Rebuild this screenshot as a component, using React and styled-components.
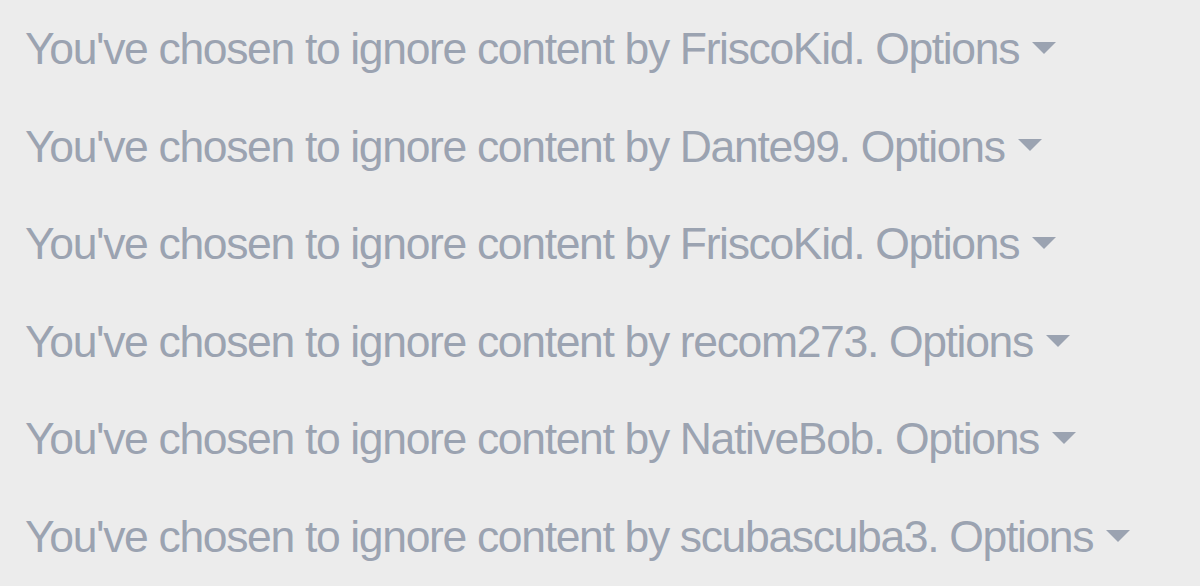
import React from "react";
import styled, { createGlobalStyle } from "styled-components";

const GlobalStyle = createGlobalStyle`
  html, body {
    margin: 0;
    padding: 0;
    background: #ececec;
  }
`;

const List = styled.div`
  display: flex;
  flex-direction: column;
  padding: 0 0 0 25px;
  font-family: "Liberation Sans", Arial, sans-serif;
  font-size: 44.5px;
  letter-spacing: -1.35px;
  color: #9ba3b1;
`;

const Row = styled.div`
  height: 97.6px;
  line-height: 97.6px;
  white-space: nowrap;
`;

const Options = styled.span`
  display: inline-flex;
  align-items: center;
  gap: 13px;
  cursor: pointer;
`;

const Caret = styled.span`
  display: inline-block;
  width: 0;
  height: 0;
  border-left: 12px solid transparent;
  border-right: 12px solid transparent;
  border-top: 12px solid #9ba3b1;
  position: relative;
  top: -1px;
`;

const users = ["FriscoKid", "Dante99", "FriscoKid", "recom273", "NativeBob", "scubascuba3"];

export default function App() {
  return (
    <>
      <GlobalStyle />
      <List>
        {users.map((u, i) => (
          <Row key={i}>
            You've chosen to ignore content by {u}.{" "}
            <Options>
              Options
              <Caret />
            </Options>
          </Row>
        ))}
      </List>
    </>
  );
}
